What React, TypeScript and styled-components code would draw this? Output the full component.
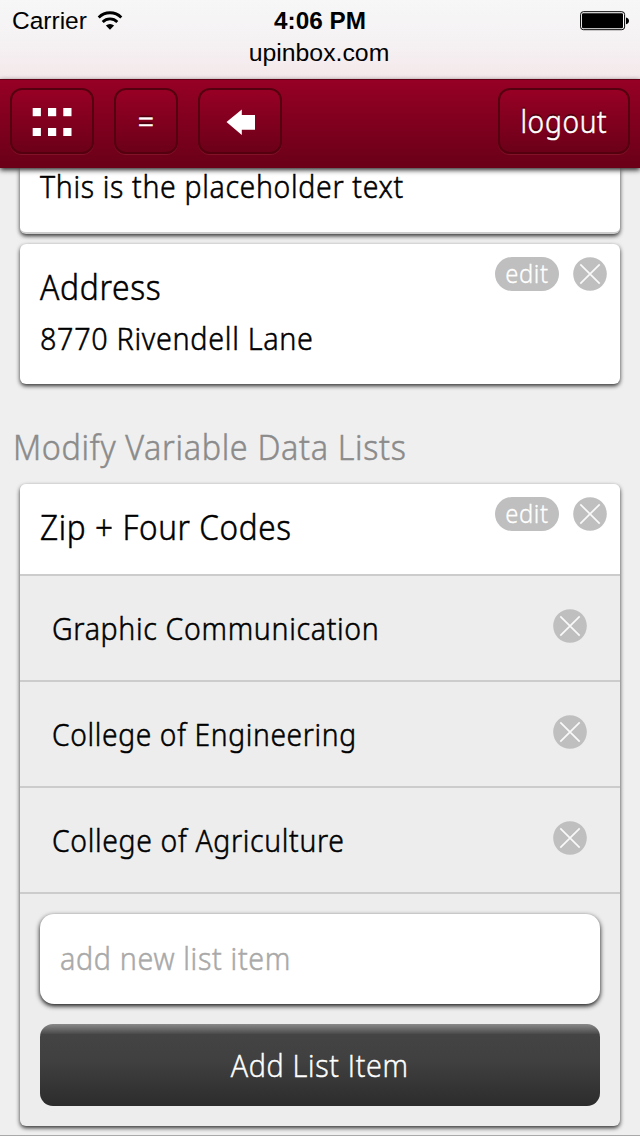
import React from 'react';
import styled, { createGlobalStyle } from 'styled-components';

const GlobalStyle = createGlobalStyle`
  * { box-sizing: border-box; }
  body {
    margin: 0;
    background: #efefef;
    color: #000;
    font-family: 'Noto Sans', sans-serif;
    font-weight: 300;
    -webkit-font-smoothing: antialiased;
  }
`;

const Page = styled.div`
  display: flex;
  flex-direction: column;
  width: 640px;
  height: 1136px;
  overflow: hidden;
  border-bottom: 1px solid #a9a9a9;
`;

const StatusBar = styled.header`
  flex: none;
  height: 79px;
  padding-top: 5px;
  background: linear-gradient(#f7f7f7, #f5f2f4 50%, #f4e8ea);
  font-family: 'Liberation Sans', sans-serif;
  font-size: 24.5px;
  font-weight: 400;
`;

const StatusRow = styled.div`
  display: grid;
  grid-template-columns: 1fr auto 1fr;
  align-items: center;
  height: 32px;
  padding: 0 11px;
`;

const Carrier = styled.div`
  display: flex;
  align-items: center;
  gap: 10px;
  padding-left: 1px;
`;

const Clock = styled.div`
  font-weight: 700;
  font-size: 24.3px;
`;

const Battery = styled.svg`
  justify-self: end;
`;

const Url = styled.div`
  height: 32px;
  line-height: 32px;
  padding-right: 2px;
  font-size: 24.8px;
  text-align: center;
`;

const Toolbar = styled.nav`
  position: relative;
  z-index: 1;
  flex: none;
  display: flex;
  align-items: flex-start;
  gap: 20px;
  height: 89px;
  padding: 8px 10px 0;
  border-top: 1px solid #620018;
  background: linear-gradient(#960024, #6a0018);
  box-shadow: 0 2px 5px rgba(0, 0, 0, 0.85);
`;

const ToolButton = styled.button<{ $width: number; $end?: boolean }>`
  display: flex;
  align-items: center;
  justify-content: center;
  width: ${(p) => p.$width}px;
  height: 66px;
  margin: 0 0 0 ${(p) => (p.$end ? 'auto' : '0')};
  padding: 0;
  border: 2px solid #55000f;
  border-radius: 12px;
  background: linear-gradient(#970024, #6c0019);
  box-shadow: 0 1px 0 rgba(255, 150, 150, 0.12);
  color: #fff;
  font: 300 31px/60px 'Noto Sans', sans-serif;
  text-shadow: 0 -2px 1px rgba(50, 0, 8, 0.8);
`;

const Narrow = styled.span<{ $scale?: number; $center?: boolean; $thin?: boolean }>`
  display: inline-block;
  white-space: nowrap;
  letter-spacing: 0.72px;
  -webkit-text-stroke: ${(p) => (p.$thin ? 0.3 : 0.5)}px currentColor;
  transform: scaleX(${(p) => p.$scale ?? 0.92});
  transform-origin: ${(p) => (p.$center ? 'center' : 'left')} center;
`;

const Content = styled.main`
  flex: 1;
  display: flex;
  flex-direction: column;
  padding: 0 20px;
`;

const Card = styled.section<{ $cut?: boolean }>`
  flex: none;
  border-radius: ${(p) => (p.$cut ? '0 0 6px 6px' : '6px')};
  background: #fff;
  box-shadow: 0 2px 4px rgba(0, 0, 0, 0.8);
`;

const PlaceholderCard = styled(Card)`
  height: 66px;
  margin-bottom: 10px;
  padding: 0 20px;
  border-bottom: 2px solid #ccc;
  font-size: 31px;
  line-height: 36px;
`;

const AddressCard = styled(Card)`
  display: flex;
  justify-content: space-between;
  height: 140px;
  padding: 13px 13px 0 20px;
`;

const AddressBody = styled.div`
  padding-top: 7px;
`;

const CardTitle = styled.h2`
  margin: 0;
  font-size: 35px;
  font-weight: inherit;
  line-height: 46px;
`;

const AddressLine = styled.p`
  margin: 5px 0 0;
  font-size: 31px;
  line-height: 46px;
`;

const Actions = styled.div`
  display: flex;
  align-items: flex-start;
  gap: 14px;
`;

const EditButton = styled.button`
  width: 64px;
  height: 34px;
  padding: 0;
  border: 0;
  border-radius: 17px;
  background: #bfbfbf;
  color: #fff;
  font: 300 25px/32px 'Noto Sans', sans-serif;

  span {
    display: block;
    height: 34px;
  }
`;

const SectionTitle = styled.h1`
  height: 100px;
  margin: 0 0 0 -7px;
  padding-top: 39px;
  color: #8b8b8b;
  font-size: 35px;
  font-weight: inherit;
  line-height: 48px;
`;

const ListCard = styled(Card)`
  height: 642px;
  background: #ededed;
`;

const ListHead = styled.div`
  display: flex;
  justify-content: space-between;
  height: 92px;
  padding: 13px 13px 0 20px;
  border-bottom: 2px solid #ccc;
  border-radius: 6px 6px 0 0;
  background: #fff;
`;

const ListTitle = styled(CardTitle)`
  padding-top: 7px;
`;

const ListRow = styled.div`
  display: flex;
  justify-content: space-between;
  height: 106px;
  padding: 33px 33px 0 32px;
  border-bottom: 2px solid #ccc;
  font-size: 31px;
  line-height: 39px;
`;

const AddForm = styled.div`
  display: flex;
  flex-direction: column;
  gap: 20px;
  padding: 20px;
`;

const Field = styled.div`
  height: 90px;
  padding: 0 20px;
  border-radius: 14px;
  background: #fff;
  box-shadow: 0 2px 5px rgba(0, 0, 0, 0.95);
  color: #a9a9a9;
  font-size: 31px;
  line-height: 89px;
`;

const AddButton = styled.button`
  height: 82px;
  padding: 0;
  border: 0;
  border-radius: 13px;
  background: linear-gradient(#8a8a8a, #4a4a4a 10px, #444 10px, #404040 45%, #2c2c2c);
  color: #fff;
  font: 300 31px/80px 'Open Sans', sans-serif;
`;

function RemoveIcon() {
  return (
    <svg width="34" height="34" viewBox="0 0 34 34">
      <circle cx="17" cy="17" r="16.8" fill="#bfbfbf" />
      <path d="M7.3 7.3 26.7 26.7M26.7 7.3 7.3 26.7" stroke="#fff" strokeWidth="1.7" strokeOpacity="0.9" />
    </svg>
  );
}

function WifiIcon() {
  return (
    <svg width="26" height="20" viewBox="0 0 26 20">
      <g fill="none" stroke="#000" strokeWidth="2.8">
        <path d="M1.7 6.4a16.1 16.1 0 0 1 22.6 0" />
        <path d="M5.7 10.9a10.4 10.4 0 0 1 14.6 0" />
      </g>
      <path d="M8.9 14.6a6.1 6.1 0 0 1 8.2 0L13 18.7z" />
    </svg>
  );
}

const items = [
  { name: 'Graphic Communication', scale: 0.92 },
  { name: 'College of Engineering', scale: 0.909 },
  { name: 'College of Agriculture', scale: 0.915 },
];

export default function App() {
  return (
    <Page>
      <GlobalStyle />
      <StatusBar>
        <StatusRow>
          <Carrier>
            Carrier
            <WifiIcon />
          </Carrier>
          <Clock>4:06 PM</Clock>
          <Battery width="49" height="20" viewBox="0 0 49 20">
            <rect x="0.6" y="0.7" width="44" height="18" rx="2.8" fill="#fff" stroke="#000" />
            <rect x="2" y="2.2" width="41" height="15" rx="1.2" />
            <path d="M46 6.5c2 .6 3 1.8 3 3.4s-1 2.8-3 3.4z" />
          </Battery>
        </StatusRow>
        <Url>upinbox.com</Url>
      </StatusBar>

      <Toolbar>
        <ToolButton $width={84}>
          <svg width="40" height="29" viewBox="0 0 40 29" fill="#fff">
            {[1, 21].map((y) =>
              [0.7, 16, 31.3].map((x) => <rect key={`${x}-${y}`} x={x} y={y} width="8.2" height="8.2" />),
            )}
          </svg>
        </ToolButton>
        <ToolButton $width={64}>
          <Narrow $center>=</Narrow>
        </ToolButton>
        <ToolButton $width={84}>
          <svg width="30" height="28" viewBox="0 0 30 28" fill="#fff">
            <path d="M1.5 15 16.8 2.5V8H30V22.8H16.8V28z" />
          </svg>
        </ToolButton>
        <ToolButton $width={132} $end>
          <Narrow $center $scale={0.908}>logout</Narrow>
        </ToolButton>
      </Toolbar>

      <Content>
        <PlaceholderCard $cut>
          <Narrow $scale={0.918}>This is the placeholder text</Narrow>
        </PlaceholderCard>
        <AddressCard>
          <AddressBody>
            <CardTitle>
              <Narrow $scale={0.909}>Address</Narrow>
            </CardTitle>
            <AddressLine>
              <Narrow $scale={0.928}>8770 Rivendell Lane</Narrow>
            </AddressLine>
          </AddressBody>
          <Actions>
            <EditButton>
              <Narrow $center $thin $scale={0.95}>edit</Narrow>
            </EditButton>
            <RemoveIcon />
          </Actions>
        </AddressCard>
        <SectionTitle>
          <Narrow $scale={0.923}>Modify Variable Data Lists</Narrow>
        </SectionTitle>
        <ListCard>
          <ListHead>
            <ListTitle>
              <Narrow $scale={0.898}>Zip + Four Codes</Narrow>
            </ListTitle>
            <Actions>
              <EditButton>
                <Narrow $center $thin $scale={0.95}>edit</Narrow>
              </EditButton>
              <RemoveIcon />
            </Actions>
          </ListHead>
          {items.map((item) => (
            <ListRow key={item.name}>
              <Narrow $scale={item.scale}>{item.name}</Narrow>
              <RemoveIcon />
            </ListRow>
          ))}
          <AddForm>
            <Field>
              <Narrow $scale={0.924}>add new list item</Narrow>
            </Field>
            <AddButton>
              <Narrow $center $scale={0.93}>Add List Item</Narrow>
            </AddButton>
          </AddForm>
        </ListCard>
      </Content>
    </Page>
  );
}
